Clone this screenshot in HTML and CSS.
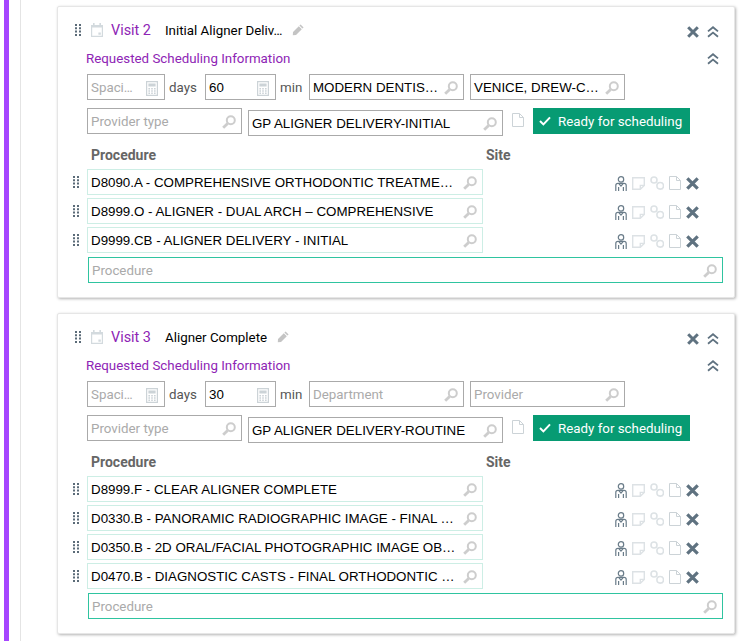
FILE: index.html
```html
<!DOCTYPE html>
<html lang="en">
<head>
  <meta charset="UTF-8">
  <meta name="viewport" content="width=device-width, initial-scale=1.0">
  <title>Treatment plan visits</title>
  <link rel="stylesheet" href="styles.css">
</head>
<body>
  <svg class="defs" width="0" height="0" aria-hidden="true">
    <symbol id="i-grip" viewBox="0 0 6 12">
      <path fill="#5b6b78" d="M0 0h2v2H0zM4 0h2v2H4zM0 3.300h2v2H0zM4 3.300h2v2H4zM0 6.600h2v2H0zM4 6.600h2v2H4zM0 10h2v2H0zM4 10h2v2H4z"/>
    </symbol>
    <symbol id="i-cal" viewBox="0 0 12 14">
      <path fill="none" stroke="#d3dade" stroke-width="1.200" d="M.6 2.600h10.800v10.800H.6z"/>
      <path fill="#d3dade" d="M0 2h12v2.600H0zM2 0h1.600v3H2zM8.400 0H10v3H8.400zM7.400 9.400h2.400v2.400H7.400z"/>
    </symbol>
    <symbol id="i-pencil" viewBox="0 0 12 12">
      <path fill="#c4c4c4" d="M8.600.4 11.600 3.400 10.400 4.600 7.400 1.600zM6.800 2.200l3 3L4 11 .8 11.200 1 8z"/>
    </symbol>
    <symbol id="i-x" viewBox="0 0 12 12">
      <path fill="none" stroke="#5f7280" stroke-width="3" d="M1.200 1.200l9.600 9.600M10.800 1.200l-9.600 9.600"/>
    </symbol>
    <symbol id="i-up" viewBox="0 0 12 12">
      <path fill="none" stroke="#5f7280" stroke-width="1.800" d="M1 5.400 6 1.200l5 4.200M1 10.800l5-4.200 5 4.200"/>
    </symbol>
    <symbol id="i-calc" viewBox="0 0 12 15">
      <path fill="none" stroke="#ccd3d7" stroke-width="1.200" d="M.6.600h10.800v13.800H.6z"/>
      <path fill="#ccd3d7" d="M2.400 2.400h7.200v3H2.400zM2.400 7h1.600v1.400H2.400zM5.200 7h1.600v1.400H5.200zM8 7h1.600v1.400H8zM2.400 9.300h1.600v1.400H2.400zM5.200 9.300h1.600v1.400H5.200zM8 9.300h1.600v1.400H8zM2.400 11.600h1.600V13H2.400zM5.200 11.600h1.600V13H5.200zM8 11.600h1.600V13H8z"/>
    </symbol>
    <symbol id="i-search" viewBox="0 0 14 14">
      <circle cx="8.800" cy="5.200" r="4" fill="none" stroke="#cdcdcd" stroke-width="2"/>
      <path fill="none" stroke="#cdcdcd" stroke-width="2.800" d="M5.600 8.400 1.200 12.800"/>
    </symbol>
    <symbol id="i-doc" viewBox="0 0 12 14">
      <path fill="#fff" stroke="#ccd3d7" d="M.5.500h7l4 4v9H.5z"/>
      <path fill="none" stroke="#ccd3d7" d="M7.500.500v4h4"/>
    </symbol>
    <symbol id="i-person" viewBox="0 0 12 15">
      <circle cx="6" cy="3.400" r="2.700" fill="none" stroke="#6a7c89" stroke-width="1.200"/>
      <path fill="none" stroke="#6a7c89" stroke-width="1.200" d="M.8 15V9.400Q.8 7.400 3 7.400h6q2.200 0 2.200 2V15M3.600 15v-4M8.400 15v-4M3.600 7.400 6 10l2.400-2.600"/>
    </symbol>
    <symbol id="i-note" viewBox="0 0 13 13">
      <path fill="none" stroke="#dde2e5" stroke-width="1.400" d="M.7.700h11.600v7.700l-4 3.900H.7zM12.300 8.400h-4v3.900"/>
    </symbol>
    <symbol id="i-link" viewBox="0 0 14 14">
      <circle cx="4" cy="4" r="3" fill="none" stroke="#dde2e5" stroke-width="1.600"/>
      <circle cx="10.200" cy="9.800" r="3.300" fill="none" stroke="#dde2e5" stroke-width="1.600"/>
      <path fill="none" stroke="#dde2e5" d="M6.400 6.400l1.600 1.400"/>
    </symbol>
    <symbol id="i-check" viewBox="0 0 12 10">
      <path fill="none" stroke="#fff" stroke-width="2" d="M1 5l3.400 3.400L11 1.400"/>
    </symbol>
  </svg>

  <div class="rail">
    <div class="pane">

      <section class="card">
        <div class="visit-head">
          <svg class="ic-grip"><use href="#i-grip"/></svg>
          <svg class="ic-cal"><use href="#i-cal"/></svg>
          <span class="visit-no">Visit 2</span>
          <span class="visit-name">Initial Aligner Deliv…</span>
          <svg class="ic-pencil"><use href="#i-pencil"/></svg>
          <svg class="ic-x head-x"><use href="#i-x"/></svg>
          <svg class="ic-up"><use href="#i-up"/></svg>
        </div>
        <div class="sched-head">
          <span>Requested Scheduling Information</span>
          <svg class="ic-up"><use href="#i-up"/></svg>
        </div>
        <div class="fields">
          <div class="field w-spacing"><span class="hint">Spaci…</span><svg class="ic-calc"><use href="#i-calc"/></svg></div>
          <span class="unit days">days</span>
          <div class="field w-min"><span class="txt">60</span><svg class="ic-calc"><use href="#i-calc"/></svg></div>
          <span class="unit mins">min</span>
          <div class="field w-dept"><span class="txt">MODERN DENTIS…</span><svg class="ic-search"><use href="#i-search"/></svg></div>
          <div class="field w-dept"><span class="txt">VENICE, DREW-C…</span><svg class="ic-search"><use href="#i-search"/></svg></div>
        </div>
        <div class="fields second">
          <div class="field w-type"><span class="hint">Provider type</span><svg class="ic-search"><use href="#i-search"/></svg></div>
          <div class="field w-appt"><span class="txt">GP ALIGNER DELIVERY-INITIAL</span><svg class="ic-search"><use href="#i-search"/></svg></div>
          <svg class="ic-doc appt-doc"><use href="#i-doc"/></svg>
          <button class="ready"><svg class="ic-check"><use href="#i-check"/></svg>Ready for scheduling</button>
        </div>
        <div class="proc-head"><span class="col-proc">Procedure</span><span>Site</span></div>
        <div class="proc">
          <svg class="ic-grip"><use href="#i-grip"/></svg>
          <div class="field proc-field"><span class="txt">D8090.A - COMPREHENSIVE ORTHODONTIC TREATME…</span><svg class="ic-search"><use href="#i-search"/></svg></div>
          <div class="actions">
            <svg class="ic-person"><use href="#i-person"/></svg>
            <svg class="ic-note"><use href="#i-note"/></svg>
            <svg class="ic-link"><use href="#i-link"/></svg>
            <svg class="ic-doc"><use href="#i-doc"/></svg>
            <svg class="ic-x"><use href="#i-x"/></svg>
          </div>
        </div>
        <div class="proc">
          <svg class="ic-grip"><use href="#i-grip"/></svg>
          <div class="field proc-field"><span class="txt">D8999.O - ALIGNER - DUAL ARCH – COMPREHENSIVE</span><svg class="ic-search"><use href="#i-search"/></svg></div>
          <div class="actions">
            <svg class="ic-person"><use href="#i-person"/></svg>
            <svg class="ic-note"><use href="#i-note"/></svg>
            <svg class="ic-link"><use href="#i-link"/></svg>
            <svg class="ic-doc"><use href="#i-doc"/></svg>
            <svg class="ic-x"><use href="#i-x"/></svg>
          </div>
        </div>
        <div class="proc">
          <svg class="ic-grip"><use href="#i-grip"/></svg>
          <div class="field proc-field"><span class="txt">D9999.CB - ALIGNER DELIVERY - INITIAL</span><svg class="ic-search"><use href="#i-search"/></svg></div>
          <div class="actions">
            <svg class="ic-person"><use href="#i-person"/></svg>
            <svg class="ic-note"><use href="#i-note"/></svg>
            <svg class="ic-link"><use href="#i-link"/></svg>
            <svg class="ic-doc"><use href="#i-doc"/></svg>
            <svg class="ic-x"><use href="#i-x"/></svg>
          </div>
        </div>
        <div class="field add-proc"><span class="hint">Procedure</span><svg class="ic-search"><use href="#i-search"/></svg></div>
      </section>

      <section class="card">
        <div class="visit-head">
          <svg class="ic-grip"><use href="#i-grip"/></svg>
          <svg class="ic-cal"><use href="#i-cal"/></svg>
          <span class="visit-no">Visit 3</span>
          <span class="visit-name">Aligner Complete</span>
          <svg class="ic-pencil"><use href="#i-pencil"/></svg>
          <svg class="ic-x head-x"><use href="#i-x"/></svg>
          <svg class="ic-up"><use href="#i-up"/></svg>
        </div>
        <div class="sched-head">
          <span>Requested Scheduling Information</span>
          <svg class="ic-up"><use href="#i-up"/></svg>
        </div>
        <div class="fields">
          <div class="field w-spacing"><span class="hint">Spaci…</span><svg class="ic-calc"><use href="#i-calc"/></svg></div>
          <span class="unit days">days</span>
          <div class="field w-min"><span class="txt">30</span><svg class="ic-calc"><use href="#i-calc"/></svg></div>
          <span class="unit mins">min</span>
          <div class="field w-dept"><span class="hint">Department</span><svg class="ic-search"><use href="#i-search"/></svg></div>
          <div class="field w-dept"><span class="hint">Provider</span><svg class="ic-search"><use href="#i-search"/></svg></div>
        </div>
        <div class="fields second">
          <div class="field w-type"><span class="hint">Provider type</span><svg class="ic-search"><use href="#i-search"/></svg></div>
          <div class="field w-appt"><span class="txt">GP ALIGNER DELIVERY-ROUTINE</span><svg class="ic-search"><use href="#i-search"/></svg></div>
          <svg class="ic-doc appt-doc"><use href="#i-doc"/></svg>
          <button class="ready"><svg class="ic-check"><use href="#i-check"/></svg>Ready for scheduling</button>
        </div>
        <div class="proc-head"><span class="col-proc">Procedure</span><span>Site</span></div>
        <div class="proc">
          <svg class="ic-grip"><use href="#i-grip"/></svg>
          <div class="field proc-field"><span class="txt">D8999.F - CLEAR ALIGNER COMPLETE</span><svg class="ic-search"><use href="#i-search"/></svg></div>
          <div class="actions">
            <svg class="ic-person"><use href="#i-person"/></svg>
            <svg class="ic-note"><use href="#i-note"/></svg>
            <svg class="ic-link"><use href="#i-link"/></svg>
            <svg class="ic-doc"><use href="#i-doc"/></svg>
            <svg class="ic-x"><use href="#i-x"/></svg>
          </div>
        </div>
        <div class="proc">
          <svg class="ic-grip"><use href="#i-grip"/></svg>
          <div class="field proc-field"><span class="txt">D0330.B - PANORAMIC RADIOGRAPHIC IMAGE - FINAL …</span><svg class="ic-search"><use href="#i-search"/></svg></div>
          <div class="actions">
            <svg class="ic-person"><use href="#i-person"/></svg>
            <svg class="ic-note"><use href="#i-note"/></svg>
            <svg class="ic-link"><use href="#i-link"/></svg>
            <svg class="ic-doc"><use href="#i-doc"/></svg>
            <svg class="ic-x"><use href="#i-x"/></svg>
          </div>
        </div>
        <div class="proc">
          <svg class="ic-grip"><use href="#i-grip"/></svg>
          <div class="field proc-field"><span class="txt">D0350.B - 2D ORAL/FACIAL PHOTOGRAPHIC IMAGE OB…</span><svg class="ic-search"><use href="#i-search"/></svg></div>
          <div class="actions">
            <svg class="ic-person"><use href="#i-person"/></svg>
            <svg class="ic-note"><use href="#i-note"/></svg>
            <svg class="ic-link"><use href="#i-link"/></svg>
            <svg class="ic-doc"><use href="#i-doc"/></svg>
            <svg class="ic-x"><use href="#i-x"/></svg>
          </div>
        </div>
        <div class="proc">
          <svg class="ic-grip"><use href="#i-grip"/></svg>
          <div class="field proc-field"><span class="txt">D0470.B - DIAGNOSTIC CASTS - FINAL ORTHODONTIC …</span><svg class="ic-search"><use href="#i-search"/></svg></div>
          <div class="actions">
            <svg class="ic-person"><use href="#i-person"/></svg>
            <svg class="ic-note"><use href="#i-note"/></svg>
            <svg class="ic-link"><use href="#i-link"/></svg>
            <svg class="ic-doc"><use href="#i-doc"/></svg>
            <svg class="ic-x"><use href="#i-x"/></svg>
          </div>
        </div>
        <div class="field add-proc"><span class="hint">Procedure</span><svg class="ic-search"><use href="#i-search"/></svg></div>
      </section>

    </div>
  </div>
</body>
</html>
```

FILE: styles.css
```css
html, body {
  height: 100%;
}
body {
  margin: 0;
  padding-left: 4px;
  overflow: hidden;
  background-color: #fff;
  font-family: Roboto, Arial, sans-serif;
  font-size: 13.33px;
  color: #000;
}
svg {
  display: block;
  flex: none;
}
.defs {
  position: absolute;
}
.rail {
  height: 100%;
  border-left: 5px solid #a646ff;
  padding-left: 11px;
}
.pane {
  height: 100%;
  border-left: 1px solid #e4e4e4;
  padding: 6px 0 0 36px;
}
.card {
  width: 678px;
  box-sizing: border-box;
  margin-bottom: 15px;
  padding: 13px 11px 14px 17px;
  background-color: #fff;
  border: 1px solid #e6e6e6;
  border-radius: 2px;
  box-shadow: 1px 1px 3px #b4b4b4;
}

/* visit header */
.visit-head {
  display: flex;
  align-items: center;
  height: 20px;
}
.ic-grip {
  width: 6px;
  height: 12px;
}
.ic-cal {
  width: 12px;
  height: 14px;
  margin-left: 10px;
}
.visit-no {
  margin-left: 8px;
  font-size: 14.4px;
  color: #8e24b5;
}
.visit-name {
  margin-left: 14px;
}
.ic-pencil {
  width: 12px;
  height: 12px;
  margin-left: 10px;
}
.ic-x {
  width: 12px;
  height: 12px;
}
.head-x {
  margin-left: auto;
  margin-top: 4px;
}
.ic-up {
  width: 12px;
  height: 12px;
  margin: 2px 4px 0 8px;
}
.visit-head .ic-up {
  margin-top: 4px;
}
.sched-head {
  display: flex;
  align-items: center;
  justify-content: space-between;
  height: 18px;
  margin-top: 9px;
  padding-left: 11px;
  color: #8e24b5;
}

/* inputs */
.fields {
  display: flex;
  align-items: center;
  margin-top: 7px;
  padding-left: 12px;
}
.second {
  align-items: flex-start;
  margin-top: 8px;
}
.field {
  display: flex;
  align-items: center;
  justify-content: space-between;
  box-sizing: border-box;
  height: 26px;
  padding: 0 4px 0 3px;
  background-color: #fff;
  border: 1px solid #aaa;
}
.txt {
  font-family: "Liberation Sans", Arial, sans-serif;
  white-space: nowrap;
}
.hint {
  color: #aaa;
  white-space: nowrap;
}
.unit {
  box-sizing: border-box;
  padding-left: 4px;
  color: #555;
}
.days {
  width: 40px;
}
.mins {
  width: 33px;
}
.w-spacing {
  width: 78px;
}
.w-min {
  width: 71px;
}
.w-dept {
  width: 155px;
  margin-right: 6px;
}
.w-type {
  width: 155px;
}
.w-appt {
  width: 255px;
  margin: 2px 0 0 6px;
}
.ic-calc {
  width: 12px;
  height: 15px;
  margin: 2px 2px 0 0;
}
.ic-search {
  width: 14px;
  height: 14px;
  margin: 2px 1px 0 0;
}
.ic-doc {
  width: 12px;
  height: 14px;
}
.appt-doc {
  margin: 5px 9px 0 9px;
}
.ready {
  display: flex;
  align-items: center;
  width: 157px;
  height: 26px;
  padding: 0 0 0 6px;
  background-color: #079b73;
  border: none;
  font-family: inherit;
  font-size: 13.33px;
  color: #fff;
}
.ic-check {
  width: 12px;
  height: 10px;
  margin-right: 7px;
}

/* procedures */
.proc-head {
  display: flex;
  margin-top: 11px;
  padding-left: 16px;
  height: 22px;
  font-size: 14px;
  font-weight: bold;
  color: #666;
}
.col-proc {
  width: 395px;
}
.proc {
  display: flex;
  align-items: center;
  margin-bottom: 3px;
  margin-left: -2px;
}
.proc-field {
  width: 396px;
  margin-left: 8px;
  border-color: #cdeee5;
}
.actions {
  display: flex;
  align-items: center;
  margin: 2px 0 0 132px;
}
.ic-person {
  width: 12px;
  height: 15px;
}
.ic-note {
  width: 13px;
  height: 13px;
  margin-left: 5px;
}
.ic-link {
  width: 14px;
  height: 14px;
  margin-left: 5px;
}
.actions .ic-doc {
  margin-left: 5px;
}
.actions .ic-x {
  width: 13px;
  height: 13px;
  margin-left: 5px;
}
.add-proc {
  margin: 4px 0 0 13px;
  border-color: #2fc4a0;
}
```
